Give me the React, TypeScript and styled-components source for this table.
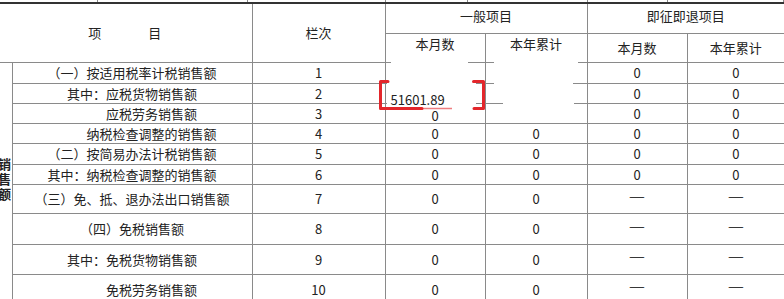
import React from 'react';
import styled, { createGlobalStyle } from 'styled-components';

const LINE = '#8a8a8a';

const GlobalStyle = createGlobalStyle`
  html, body {
    margin: 0;
    padding: 0;
    background: #fff;
  }
  body {
    font-family: 'Noto Sans CJK SC', 'Noto Sans', sans-serif;
    color: #222;
  }
`;

const Page = styled.div`
  position: relative;
  width: 784px;
  height: 299px;
  overflow: hidden;
`;

// tail of the table above, only its column lines show
const PrevStub = styled.div`
  display: flex;
  height: 2px;
`;
const StubCell = styled.div<{ $w: number }>`
  flex: 0 0 ${(p) => p.$w}px;
  box-sizing: border-box;
  border-right: 1px solid ${LINE};
`;

const Sheet = styled.table`
  width: 784px;
  table-layout: fixed;
  border-collapse: collapse;
  border-top: 2px solid #333;
  font-size: 13px;
`;

const Col = styled.col<{ $w: number }>`
  width: ${(p) => p.$w}px;
`;

const Row = styled.tr<{ $h: number }>`
  height: ${(p) => p.$h}px;
`;

const Cell = styled.td<{ $noLeft?: boolean; $noRight?: boolean; $valign?: 'top' | 'middle' | 'bottom' }>`
  position: relative;
  padding: 0;
  border: 1px solid ${LINE};
  ${(p) => (p.$noLeft ? 'border-left: none;' : '')}
  ${(p) => (p.$noRight ? 'border-right: none;' : '')}
  text-align: center;
  vertical-align: ${(p) => p.$valign || 'middle'};
  line-height: 15px;
  white-space: nowrap;
`;

const SubHead = styled.span<{ $lift: number }>`
  display: inline-block;
  padding-bottom: ${(p) => p.$lift}px;
`;

const HeadTitle = styled.span`
  letter-spacing: 2px;
`;

const ItemText = styled.span`
  white-space: pre;
`;

const LabelCell = styled.td`
  padding: 0;
  border: none;
  border-right: 1px solid ${LINE};
  vertical-align: middle;
`;

const LabelClip = styled.div`
  width: 11px;
  overflow: hidden;
  padding-bottom: 10px;
`;

const LabelText = styled.div`
  width: 13px;
  margin-left: -2px;
  font-weight: bold;
  font-size: 13px;
  line-height: 15px;
  white-space: normal;
  color: #222;
`;

const Mask = styled.span<{ $left: number; $width: number }>`
  position: absolute;
  top: -2px;
  left: ${(p) => p.$left}px;
  width: ${(p) => p.$width}px;
  height: 3px;
  background: #fff;
  z-index: 1;
`;

const Amount = styled.span`
  position: relative;
  z-index: 2;
  display: block;
  text-align: left;
  padding-left: 5px;
  margin-bottom: -4px;
`;

const LowZero = styled.span`
  display: inline-block;
  padding-top: 4px;
`;

const Dash = styled.span`
  display: inline-block;
  font-size: 9px;
  line-height: 9px;
  padding-bottom: 10px;
  color: #000;
  font-weight: bold;
`;

const Annotation = styled.svg`
  position: absolute;
  left: 0;
  top: 0;
  pointer-events: none;
  z-index: 3;
`;

type Val = string | null;
type Masks = [number, number][];

type RowData = {
  item: string;
  no: number;
  h: number;
  general: [React.ReactNode, React.ReactNode];
  instant: [Val, Val];
  masks?: Masks;
};

const dash = <Dash>——</Dash>;

const rows: RowData[] = [
  { item: '（一）按适用税率计税销售额', no: 1, h: 21, general: [null, null], instant: ['0', '0'], masks: [[5, 77], [8, 84]] },
  {
    item: '其中：应税货物销售额',
    no: 2,
    h: 20,
    general: [<Amount key="a">51601.89</Amount>, null],
    instant: ['0', '0'],
    masks: [[1, 89], [8, 79]],
  },
  {
    item: '　　　应税劳务销售额',
    no: 3,
    h: 20,
    general: [<LowZero key="z">0</LowZero>, null],
    instant: ['0', '0'],
    masks: [[1, 89], [17, 71]],
  },
  { item: '　　　纳税检查调整的销售额', no: 4, h: 20, general: ['0', '0'], instant: ['0', '0'] },
  { item: '（二）按简易办法计税销售额', no: 5, h: 21, general: ['0', '0'], instant: ['0', '0'] },
  { item: '其中：纳税检查调整的销售额', no: 6, h: 20, general: ['0', '0'], instant: ['0', '0'] },
  { item: '（三）免、抵、退办法出口销售额', no: 7, h: 29, general: ['0', '0'], instant: [null, null] },
  { item: '（四）免税销售额', no: 8, h: 31, general: ['0', '0'], instant: [null, null] },
  { item: '其中：免税货物销售额', no: 9, h: 30, general: ['0', '0'], instant: [null, null] },
  { item: '　　　免税劳务销售额', no: 10, h: 30, general: ['0', '0'], instant: [null, null] },
];

const stubWidths = [98, 150, 138, 82, 120, 80, 116];

const App = () => {
  return (
    <Page>
      <GlobalStyle />
      <PrevStub>
        {stubWidths.map((w, i) => (
          <StubCell key={i} $w={w} />
        ))}
      </PrevStub>
      <Sheet>
        <colgroup>
          <Col $w={12} />
          <Col $w={240} />
          <Col $w={133} />
          <Col $w={100} />
          <Col $w={102} />
          <Col $w={100} />
          <Col $w={97} />
        </colgroup>
        <tbody>
          <Row $h={30}>
            <Cell colSpan={2} rowSpan={2} $noLeft>
              <HeadTitle>项　　　目</HeadTitle>
            </Cell>
            <Cell rowSpan={2}>栏次</Cell>
            <Cell colSpan={2}>
              <SubHead $lift={6}>一般项目</SubHead>
            </Cell>
            <Cell colSpan={2} $noRight>
              <SubHead $lift={6}>即征即退项目</SubHead>
            </Cell>
          </Row>
          <Row $h={29}>
            <Cell>
              <SubHead $lift={8}>本月数</SubHead>
            </Cell>
            <Cell>
              <SubHead $lift={8}>本年累计</SubHead>
            </Cell>
            <Cell>
              <SubHead $lift={0}>本月数</SubHead>
            </Cell>
            <Cell $noRight>
              <SubHead $lift={0}>本年累计</SubHead>
            </Cell>
          </Row>
          {rows.map((r, i) => (
            <Row key={r.no} $h={r.h}>
              {i === 0 && (
                <LabelCell rowSpan={rows.length}>
                  <LabelClip>
                    <LabelText>销售额</LabelText>
                  </LabelClip>
                </LabelCell>
              )}
              <Cell>
                <ItemText>{r.item}</ItemText>
              </Cell>
              <Cell>{r.no}</Cell>
              {r.general.map((g, k) => (
                <Cell key={k} $valign={r.no === 2 && k === 0 ? 'bottom' : 'middle'}>
                  {r.masks && <Mask $left={r.masks[k][0]} $width={r.masks[k][1]} />}
                  {g}
                </Cell>
              ))}
              <Cell>{r.instant[0] ?? dash}</Cell>
              <Cell $noRight>{r.instant[1] ?? dash}</Cell>
            </Row>
          ))}
        </tbody>
      </Sheet>
      <Annotation width={784} height={299} viewBox="0 0 784 299">
        <path
          d="M388 81.5 H380.5 V108.5 H422"
          stroke="#e3262b"
          strokeWidth={3}
          fill="none"
          strokeLinecap="round"
          strokeLinejoin="round"
        />
        <path d="M422 108.5 H452" stroke="#e3262b" strokeWidth={1.5} strokeOpacity={0.6} fill="none" />
        <path
          d="M473.5 81.5 H483.5 V108.5 H474"
          stroke="#e3262b"
          strokeWidth={3}
          fill="none"
          strokeLinecap="round"
          strokeLinejoin="round"
        />
      </Annotation>
    </Page>
  );
};

export default App;
